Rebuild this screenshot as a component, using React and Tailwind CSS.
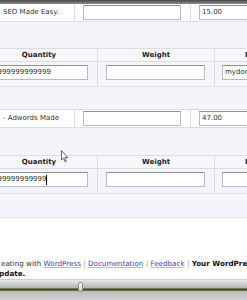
const Box = ({ children, className = '' }) => (
  <div
    className={`h-[15px] bg-white border border-[#b9bbc0] border-t-[#8e9095] flex items-center pl-[2px] overflow-hidden whitespace-nowrap ${className}`}
  >
    {children}
  </div>
);

const ProductRow = ({ name, price, className = '' }) => (
  <div className={`flex bg-white border-b border-[#dcdde4] ${className}`}>
    <div className="w-[75px] shrink-0 border-r border-[#dcdde4] pl-[3px] flex items-center whitespace-nowrap overflow-hidden">
      {name}
    </div>
    <div className="w-[116px] shrink-0 border-r border-[#dcdde4] pl-[8px] pr-[9px] flex items-center">
      <Box className="w-full" />
    </div>
    <div className="w-[116px] shrink-0 pl-[8px] flex items-center">
      <Box className="w-full">{price}</Box>
    </div>
  </div>
);

const OptionBlock = ({ qty, url, caret }) => (
  <div className="ml-[-19px] w-[351px]">
    <div className="grid grid-cols-[117px_117px_117px] h-[14px] border-y border-[#dcdde4] bg-[#f7f7fa] font-bold text-[#222]">
      <div className="border-r border-[#dcdde4] flex items-center justify-center">Quantity</div>
      <div className="border-r border-[#dcdde4] flex items-center justify-center">Weight</div>
      <div className="flex items-center justify-center whitespace-nowrap">Download URL</div>
    </div>
    <div className="grid grid-cols-[117px_117px_117px] h-[25px] border-b border-[#e3e4ea]">
      <div className="border-r border-[#dcdde4] pl-[9px] pr-[9px] pt-[3px]">
        <Box className={caret ? 'border-[#7f8186]' : ''}>
          {qty}
          {caret && <span className="inline-block w-[1px] h-[10px] bg-[#111]" />}
        </Box>
      </div>
      <div className="border-r border-[#dcdde4] pl-[8px] pr-[9px] pt-[3px]">
        <Box />
      </div>
      <div className="pl-[7px] pt-[3px]">
        <Box className="w-[110px]">{url}</Box>
      </div>
    </div>
  </div>
);

export default function App() {
  return (
    <div className="relative w-[247px] h-[300px] overflow-hidden bg-[#f4f5fa] font-['DejaVu_Sans',sans-serif] text-[7px] leading-none text-[#333]">
      <div className="h-[4px] bg-gradient-to-b from-[#4a4a4a] to-[#8c8c8c]" />
      <ProductRow name="SEO Made Easy." price="15.00" className="h-[18px]" />

      <div className="h-[26px]" />
      <OptionBlock qty="9999999999999" url="mydomain.com/download" />

      <div className="h-[22px]" />
      <ProductRow name="- Adwords Made" price="47.00" className="h-[19px] border-t" />

      <div className="h-[27px]" />
      <OptionBlock qty="999999999999" url="" caret />

      <div className="h-[24px] border-b border-[#e3e4ea]" />

      <div className="bg-white h-[61px] pt-[41px] text-[7.2px] text-[#333] leading-[10px]">
        <div className="whitespace-nowrap ml-[1px]">
          eating with{' '}
          <span className="text-[#3a4a94] underline decoration-[#b7bdd6]">WordPress</span>
          <span className="text-[#999]"> | </span>
          <span className="text-[#3a4a94] underline decoration-[#b7bdd6]">Documentation</span>
          <span className="text-[#999]"> | </span>
          <span className="text-[#3a4a94] underline decoration-[#b7bdd6]">Feedback</span>
          <span className="text-[#999]"> | </span>
          <span className="font-bold text-[#111]">Your WordPress version is out of date.</span>
        </div>
        <div className="whitespace-nowrap ml-[-6px] font-bold text-[#111]">update.</div>
      </div>

      <div className="h-[24px] flex flex-col">
        <div className="h-[9px] bg-gradient-to-b from-[#e9e9e9] to-[#b4b4b4] border-t border-[#cfcfcf]" />
        <div className="h-[1px] bg-[#6f6f6f]" />
        <div className="h-[2px] bg-gradient-to-b from-[#3c4913] to-[#6e7c2a]" />
        <div className="flex-1 bg-gradient-to-b from-[#bdbdbd] to-[#d9d9d9]" />
      </div>

      <div className="absolute left-[78px] top-[282px] w-[5px] h-[10px] rounded-[2px] bg-gradient-to-b from-[#fafafa] to-[#cfcfcf] border border-[#8d8d8d]" />

      <svg className="absolute left-[61px] top-[150px]" width="8" height="13" viewBox="0 0 8 13">
        <path d="M0.5 0.5 L0.5 10 L2.6 8.1 L4.1 11.8 L5.4 11.2 L3.9 7.6 L6.8 7.6 Z" fill="#fff" stroke="#444" strokeWidth="0.8" strokeLinejoin="round" />
      </svg>
    </div>
  );
}
